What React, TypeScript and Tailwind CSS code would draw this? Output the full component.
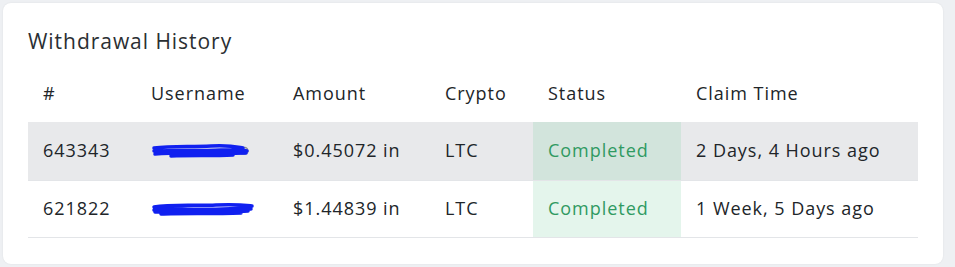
const rows = [
  { id: "643343", amount: "$0.45072 in", crypto: "LTC", status: "Completed", time: "2 Days, 4 Hours ago" },
  { id: "621822", amount: "$1.44839 in", crypto: "LTC", status: "Completed", time: "1 Week, 5 Days ago" },
];

// blue marker scribble hiding the username
const Scribble = ({ alt }: { alt?: boolean }) => (
  <svg width="104" height="16" viewBox="0 0 104 16" className="block">
    <path d="M88 6 C92 3 97 4 97 8 C97 11 92 12 89 10" stroke="#8a8f95" strokeWidth="1.2" fill="none" />
    <path
      d={
        alt
          ? "M3 6 C20 3 45 5 65 4 S92 4 101 5 M3 9 C25 7 50 9 72 8 S92 8 100 8 M4 11 C30 10 60 12 97 10 M10 13 C30 12 60 13 90 12"
          : "M3 5 C20 3 40 4 60 3 S86 4 92 5 M3 8 C25 7 50 8 70 7 S90 7 96 8 M4 11 C30 9 60 11 95 10 M20 13 C40 12 60 13 82 12"
      }
      stroke="#1020f0"
      strokeWidth="3.5"
      strokeLinecap="round"
      fill="none"
    />
  </svg>
);

export default function App() {
  return (
    <div className="h-[267px] w-[955px] bg-[#eef0f3] pt-[3px] pl-[3px] font-['Open_Sans',sans-serif] tracking-[0.06em] text-[#212529]">
      <div className="h-[261px] w-[940px] rounded-lg bg-white px-[25px] pt-[26px] shadow-[0_0_2px_rgba(0,0,0,0.08)]">
        <h2 className="text-[21px] leading-[25px] text-[#2b2f33]">Withdrawal History</h2>
        <table className="mt-[27px] w-[890px] table-fixed border-collapse text-[18px]">
          <colgroup>
            <col className="w-[108px]" />
            <col className="w-[142px]" />
            <col className="w-[152px]" />
            <col className="w-[103px]" />
            <col className="w-[148px]" />
            <col />
          </colgroup>
          <thead>
            <tr className="h-[41px] text-left align-top leading-[24px]">
              <th className="px-[15px] font-medium">#</th>
              <th className="px-[15px] font-medium">Username</th>
              <th className="px-[15px] font-medium">Amount</th>
              <th className="px-[15px] font-medium">Crypto</th>
              <th className="px-[15px] font-medium">Status</th>
              <th className="px-[15px] font-medium">Claim Time</th>
            </tr>
          </thead>
          <tbody>
            {rows.map((r, i) => (
              <tr
                key={r.id}
                className={`border-b border-[#e3e5e8] ${i === 0 ? "h-[58px] bg-[#e8e9eb]" : "h-[57px] bg-white"}`}
              >
                <td className="px-[15px]">{r.id}</td>
                <td className="px-[15px]">
                  <Scribble alt={i === 1} />
                </td>
                <td className="px-[15px]">{r.amount}</td>
                <td className="px-[15px]">{r.crypto}</td>
                <td className={`px-[15px] text-[#2f9a62] ${i === 0 ? "bg-[#d2e4dc]" : "bg-[#e4f5ec]"}`}>
                  {r.status}
                </td>
                <td className="px-[15px]">{r.time}</td>
              </tr>
            ))}
          </tbody>
        </table>
      </div>
    </div>
  );
}
